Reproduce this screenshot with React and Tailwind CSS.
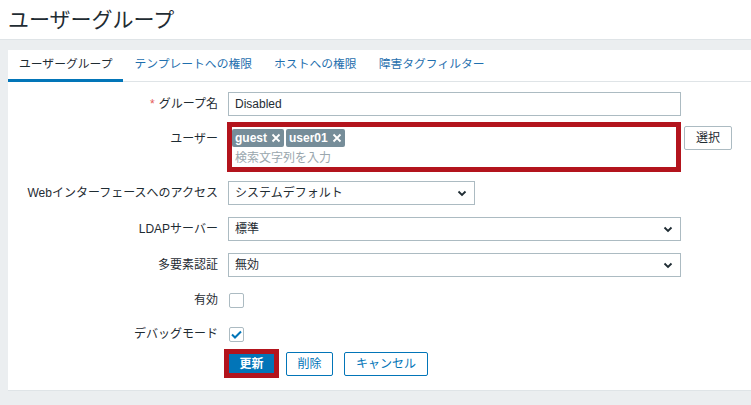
import { useState } from "react";

const font = { fontFamily: '"Liberation Sans", "Noto Sans CJK JP", sans-serif' };

function Chevron() {
  return (
    <svg width="10" height="7" viewBox="0 0 10 7" className="shrink-0">
      <path d="M1.5 1.5 L5 5 L8.5 1.5" fill="none" stroke="#1f2c33" strokeWidth="1.8" />
    </svg>
  );
}

function Tag({ name }) {
  return (
    <span className="flex items-center gap-[4px] h-[18px] px-[3px] rounded-[2px] bg-[#768d99] text-white text-[12px] font-bold">
      {name}
      <svg width="10" height="10" viewBox="0 0 10 10">
        <path d="M1.5 1.5 L8.5 8.5 M8.5 1.5 L1.5 8.5" stroke="white" strokeWidth="1.8" />
      </svg>
    </span>
  );
}

function Row({ label, required, children, className = "" }) {
  return (
    <div className={"flex items-center " + className}>
      <div className="w-[210px] text-right text-[12px] text-[#1f2c33]">
        {required && <span className="text-[#e45959] mr-[4px]">*</span>}
        {label}
      </div>
      <div className="ml-[10px] flex items-center">{children}</div>
    </div>
  );
}

function SelectBox({ value, width }) {
  return (
    <div
      className={
        "h-[24px] border border-[#acbbc2] bg-white flex items-center justify-between pl-[6px] pr-[7px] text-[12px] text-[#1f2c33] " +
        width
      }
    >
      <span>{value}</span>
      <Chevron />
    </div>
  );
}

function Checkbox({ checked }) {
  return (
    <div className="w-[15px] h-[15px] border border-[#acbbc2] rounded-[2px] bg-white flex items-center justify-center ml-[1px]">
      {checked && (
        <svg width="11" height="9" viewBox="0 0 11 9">
          <path d="M1 4.5 L4 7.5 L10 1.5" fill="none" stroke="#0275b8" strokeWidth="2" />
        </svg>
      )}
    </div>
  );
}

export default function App() {
  const [tab] = useState(0);
  const tabs = ["ユーザーグループ", "テンプレートへの権限", "ホストへの権限", "障害タグフィルター"];

  return (
    <div style={font} className="w-[751px] h-[405px] bg-[#ebeef0] overflow-hidden">
      <div className="h-[40px] bg-white border-b border-[#dfe4e7] flex items-center pl-[8px]">
        <h1 className="text-[21px] text-[#1f2c33] leading-none">ユーザーグループ</h1>
      </div>

      <div className="mt-[10px] ml-[8px] bg-white border-b border-[#dfe4e7] h-[341px]">
        <div className="flex h-[32px] border-b border-[#dfe4e7]">
          {tabs.map((t, i) => (
            <div
              key={t}
              className={
                "px-[11px] flex items-center text-[11.8px] border-b-[3px] -mb-[1px] " +
                (i === tab
                  ? "border-[#0275b8] text-[#1f2c33]"
                  : "border-transparent text-[#1f6fae]")
              }
            >
              {t}
            </div>
          ))}
        </div>

        <div className="flex flex-col">
          <Row label="グループ名" required className="mt-[10px]">
            <div className="w-[453px] h-[24px] border border-[#acbbc2] flex items-center px-[6px] text-[12px] text-[#1f2c33]">
              Disabled
            </div>
          </Row>

          <div className="flex items-start mt-[6px]">
            <div className="w-[210px] text-right text-[12px] text-[#1f2c33] pt-[8px]">ユーザー</div>
            <div className="ml-[9px] w-[454px] h-[50px] border-[5px] border-[#b3141d] bg-white flex flex-col">
              <div className="flex gap-[2px] mt-[2px]">
                <Tag name="guest" />
                <Tag name="user01" />
              </div>
              <div className="text-[12px] text-[#9aa7ae] pl-[3px] mt-[4px] leading-[15px]">
                検索文字列を入力
              </div>
            </div>
            <button className="ml-[3px] mt-[4px] w-[48px] h-[24px] border border-[#acbbc2] rounded-[2px] bg-white text-[12px] text-[#1f2c33]">
              選択
            </button>
          </div>

          <Row label="Webインターフェースへのアクセス" className="mt-[9px]">
            <SelectBox value="システムデフォルト" width="w-[247px]" />
          </Row>

          <Row label="LDAPサーバー" className="mt-[12px]">
            <SelectBox value="標準" width="w-[453px]" />
          </Row>

          <Row label="多要素認証" className="mt-[12px]">
            <SelectBox value="無効" width="w-[453px]" />
          </Row>

          <Row label="有効" className="mt-[11px] h-[24px]">
            <Checkbox />
          </Row>

          <Row label="デバッグモード" className="mt-[10px] h-[24px]">
            <Checkbox checked />
          </Row>

          <div className="flex items-center mt-[3px] ml-[216px]">
            <div className="border-[5px] border-[#b3141d]">
              <button className="w-[45px] h-[19px] bg-[#0275b8] text-white text-[12px] font-bold flex items-center justify-center">
                更新
              </button>
            </div>
            <button className="ml-[7px] w-[47px] h-[24px] border border-[#0275b8] rounded-[2px] bg-white text-[#0275b8] text-[12px]">
              削除
            </button>
            <button className="ml-[11px] w-[84px] h-[24px] border border-[#0275b8] rounded-[2px] bg-white text-[#0275b8] text-[12px]">
              キャンセル
            </button>
          </div>
        </div>
      </div>
    </div>
  );
}
